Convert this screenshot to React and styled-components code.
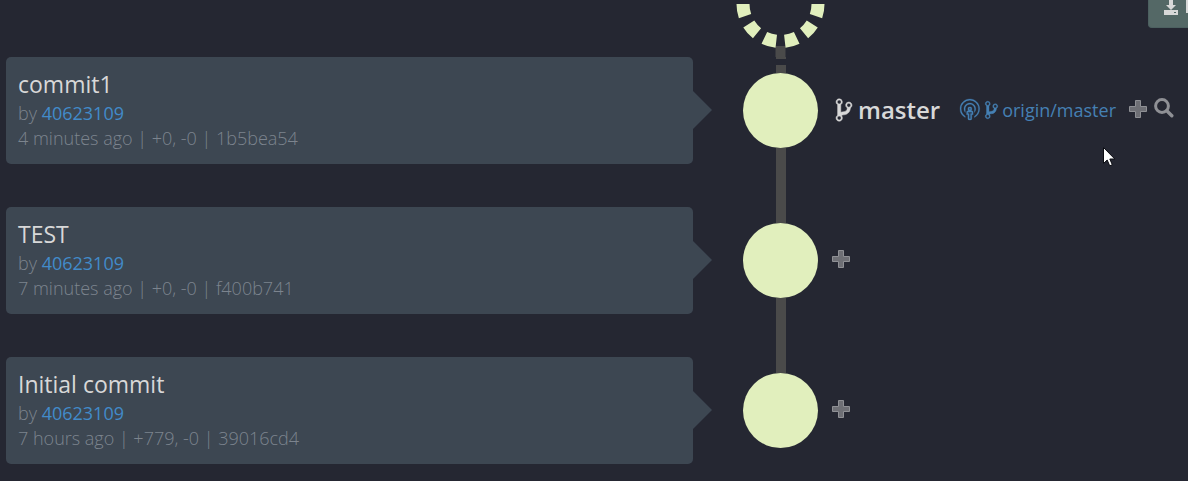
import React from "react";
import styled, { createGlobalStyle } from "styled-components";

const GlobalStyle = createGlobalStyle`
  * { box-sizing: border-box; }
  body {
    margin: 0;
    background: #252732;
    color: #d8d8d8;
    font-family: "Open Sans", "Noto Sans", sans-serif;
    font-size: 18px;
  }
`;

const Page = styled.main`
  position: relative;
  min-height: 100vh;
  padding-left: 6px;
`;

const Row = styled.div`
  display: grid;
  grid-template-columns: minmax(0, 1fr) 50px 75px 370px;
  align-items: start;
`;

const Header = styled(Row)`
  height: 57px;
`;

const PendingNode = styled.svg`
  display: block;
  grid-column: 3;
  overflow: visible;
`;

const Toolbar = styled.div`
  display: flex;
  justify-content: flex-end;
  overflow: hidden;
`;

const SaveButton = styled.button`
  display: flex;
  align-items: flex-start;
  width: 40px;
  height: 28px;
  padding: 0 0 0 15px;
  border: 1px solid #4c6060;
  border-width: 0 0 1px 1px;
  border-radius: 0 0 0 4px;
  background: #546866;
  color: #d8d8d8;
`;

const Commit = styled.article`
  position: relative;
  height: 107px;
  padding: 11px 12px;
  border-radius: 5px;
  background: #3d4752;

  &::after {
    content: "";
    position: absolute;
    top: 34px;
    left: 100%;
    border: solid transparent;
    border-width: 19px 0 19px 19px;
    border-left-color: #3d4752;
  }
`;

const Title = styled.h2`
  margin: 0 0 1px;
  font-size: 23px;
  font-weight: 400;
  line-height: 32px;
`;

const Meta = styled.p`
  margin: 0;
  color: #7c848e;
  font-weight: 300;
  line-height: 25px;
  white-space: nowrap;
`;

const Author = styled.a`
  color: #428bca;
  font-weight: 400;
  text-decoration: none;
`;

const Track = styled.div`
  grid-column: 3;
  display: flex;
  flex-direction: column;
  align-items: center;
  height: ${(p) => (p.$last ? "107px" : "150px")};
`;

const Line = styled.div`
  width: 10px;
  height: ${(p) => (p.$grow ? "auto" : "16px")};
  flex: ${(p) => (p.$grow ? "1" : "none")};
  background: ${(p) =>
    p.$dashed
      ? "linear-gradient(#4a4a4a 2px, transparent 2px 8px, #4a4a4a 8px)"
      : "#4a4a4a"};
`;

const Dot = styled.div`
  flex: none;
  width: 75px;
  height: 75px;
  border-radius: 50%;
  background: #e1efbd;
`;

const Refs = styled.div`
  display: flex;
  align-items: center;
  height: 107px;
  padding-left: 14px;
`;

const Branch = styled.a`
  display: flex;
  align-items: center;
  gap: 6px;
  margin: 0 20px 2px 4px;
  color: #d8d8d8;
  font-size: 24px;
  font-weight: 600;
  text-decoration: none;
`;

const Remote = styled.a`
  display: flex;
  align-items: center;
  gap: 4px;
  margin: 0 13px 2px 0;
  color: #4580b4;
  text-decoration: none;
`;

const IconButton = styled.button`
  display: flex;
  margin: 0 7px 4px 0;
  padding: 0;
  border: 0;
  background: none;
  color: #8f9095;
`;

const Pointer = styled.svg`
  position: absolute;
  top: 147px;
  right: 73px;
`;

const BranchIcon = ({ width, height }) => (
  <svg width={width} height={height} viewBox="0 0 10 16" fill="currentColor" stroke="currentColor" strokeWidth="0.3" overflow="visible" aria-hidden="true">
    <path d="M10 5c0-1.11-.89-2-2-2a1.993 1.993 0 0 0-1 3.72v.3c-.02.52-.23.98-.63 1.38-.4.4-.86.61-1.38.63-.83.02-1.48.16-2 .45V4.72a1.993 1.993 0 0 0-1-3.72C.88 1 0 1.89 0 3a2 2 0 0 0 1 1.720v6.56c-.59.35-1 .99-1 1.72 0 1.11.89 2 2 2 1.11 0 2-.89 2-2 0-.53-.2-1-.53-1.36.09-.06.48-.41.59-.47.25-.11.56-.17.94-.17 1.05-.05 1.95-.45 2.75-1.25S8.95 7.77 9 6.73h-.02C9.59 6.37 10 5.73 10 5zM2 1.8c.66 0 1.2.55 1.2 1.2 0 .65-.55 1.2-1.2 1.2C1.35 4.2.8 3.65.8 3c0-.65.55-1.2 1.2-1.2zm0 12.41c-.66 0-1.2-.55-1.2-1.2 0-.65.55-1.2 1.2-1.2.65 0 1.2.55 1.2 1.2 0 .65-.55 1.2-1.2 1.2zm6-8c-.66 0-1.2-.55-1.2-1.2 0-.65.55-1.2 1.2-1.2.65 0 1.2.55 1.2 1.2 0 .65-.55 1.2-1.2 1.2z" />
  </svg>
);

const BroadcastIcon = () => (
  <svg width="21" height="21" viewBox="0 0 16 16" fill="currentColor" stroke="currentColor" strokeWidth="0.2" overflow="visible" aria-hidden="true">
    <path d="M9 9H8c.55 0 1-.45 1-1V7c0-.55-.45-1-1-1H7c-.55 0-1 .45-1 1v1c0 .55.45 1 1 1H6c-.55 0-1 .45-1 1v2h1v3c0 .55.45 1 1 1h1c.55 0 1-.45 1-1v-3h1v-2c0-.55-.45-1-1-1zM7 7h1v1H7V7zm2 4H8v4H7v-4H6v-1h3v1zm2.09-3.5c0-1.98-1.61-3.59-3.59-3.59A3.593 3.593 0 0 0 4 8.31v1.98c-.61-.77-1-1.73-1-2.8 0-2.48 2.02-4.5 4.5-4.5S12 5.01 12 7.49c0 1.06-.39 2.03-1 2.8V8.31c.06-.27.09-.53.09-.81zm3.91 0c0 2.88-1.63 5.38-4 6.63v-1.05a6.553 6.553 0 0 0 3.09-5.58A6.59 6.59 0 0 0 7.5.91 6.59 6.59 0 0 0 .91 7.5c0 2.36 1.23 4.42 3.09 5.58v1.05A7.497 7.497 0 0 1 0 7.5C0 3.36 3.36 0 7.5 0S15 3.36 15 7.5z" />
  </svg>
);

const AddButton = () => (
  <IconButton aria-label="Add branch">
    <svg width="18" height="18" viewBox="0 0 18 18">
      <path d="M6.5.5h5v6h6v5h-6v6h-5v-6h-6v-5h6z" fill="#6e6f75" stroke="currentColor" />
    </svg>
  </IconButton>
);

const SearchButton = () => (
  <IconButton aria-label="Search">
    <svg width="20" height="22" viewBox="0 0 20 22" fill="none" stroke="currentColor">
      <circle cx="8" cy="8" r="6.4" strokeWidth="3" />
      <path d="M12.8 12.8l5 5" strokeWidth="3.4" strokeLinecap="round" />
    </svg>
  </IconButton>
);

const commits = [
  { title: "commit1", meta: "4 minutes ago | +0, -0 | 1b5bea54", head: true },
  { title: "TEST", meta: "7 minutes ago | +0, -0 | f400b741" },
  { title: "Initial commit", meta: "7 hours ago | +779, -0 | 39016cd4" },
];

export default function App() {
  return (
    <Page>
      <GlobalStyle />
      <Header>
        <PendingNode width="75" height="57" viewBox="0 0 75 57" aria-hidden="true">
          <path d="M32.5 46h10v11h-10z" fill="#4a4a4a" />
          <path
            d="M0 4a37.500 37.500 0 0 0 75 0"
            fill="none"
            stroke="#e1efbd"
            strokeWidth="13"
            strokeDasharray="12.4 8.66"
          />
        </PendingNode>
        <Toolbar>
          <SaveButton aria-label="Save">
            <svg width="24" height="16" viewBox="0 0 24 16" fill="currentColor">
              <path d="M5 0h4v5h3l-5 5-5-5h3zM0 10h14v5H0z" />
              <path d="M10 12h2v1h-2z" fill="#546866" />
              <path d="M22 0h2v13h-2z" />
            </svg>
          </SaveButton>
        </Toolbar>
      </Header>
      {commits.map((c, i) => (
        <Row key={c.title}>
          <Commit>
            <Title>{c.title}</Title>
            <Meta>
              by <Author href="#author">40623109</Author>
            </Meta>
            <Meta>{c.meta}</Meta>
          </Commit>
          <Track $last={i === commits.length - 1}>
            <Line $dashed={i === 0} />
            <Dot />
            {i < commits.length - 1 && <Line $grow />}
          </Track>
          <Refs>
            {c.head && (
              <>
                <Branch href="#master">
                  <BranchIcon width={16} height={26} />
                  master
                </Branch>
                <Remote href="#origin-master">
                  <BroadcastIcon />
                  <BranchIcon width={13} height={20} />
                  origin/master
                </Remote>
              </>
            )}
            <AddButton />
            {c.head && <SearchButton />}
          </Refs>
        </Row>
      ))}
      <Pointer width="12" height="20" viewBox="0 0 12 20" aria-hidden="true">
        <path
          d="M.5.5v16l3.700-3.500 2.500 5.800 2.600-1.100-2.500-5.700h5z"
          fill="#fff"
          stroke="#0b0c12"
        />
      </Pointer>
    </Page>
  );
}
